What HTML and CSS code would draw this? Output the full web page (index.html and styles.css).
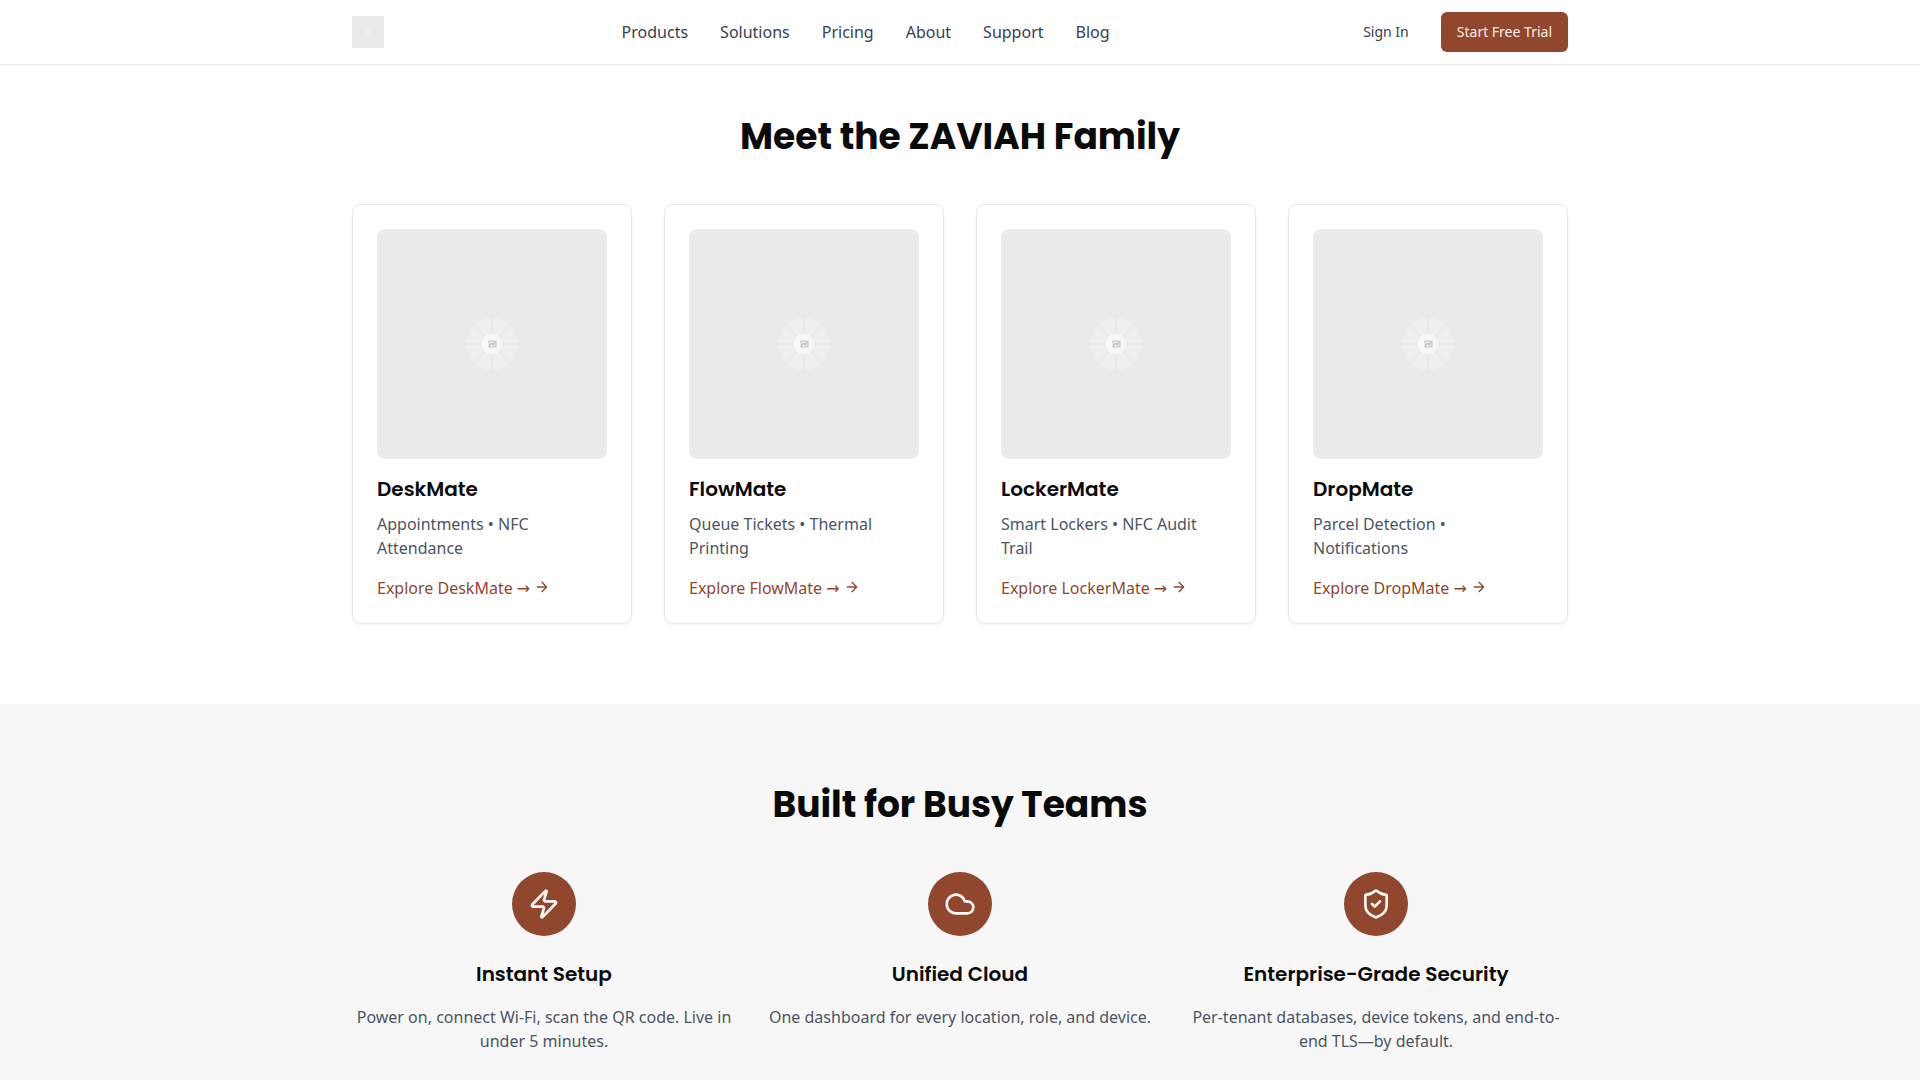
FILE: index.html
```html
<!DOCTYPE html>
<html lang="en">
<head>
<meta charset="utf-8">
<meta name="viewport" content="width=device-width, initial-scale=1">
<title>ZAVIAH</title>
<link rel="stylesheet" href="styles.css">
</head>
<body>
<svg class="sprite" aria-hidden="true">
  <symbol id="placeholder" viewBox="0 0 230 230">
    <circle cx="115" cy="115" r="26" fill="#efefef"/>
    <g stroke="#e5e5e5" stroke-width="1">
      <path d="M84 115h62M115 84v62M88 88l54 54M142 88l-54 54"/>
    </g>
    <circle cx="115" cy="115" r="11" fill="#f7f7f7" stroke="#ebebeb"/>
    <rect x="112" y="112" width="7" height="6" fill="#e4e4e4" stroke="#c4c4c4"/>
    <path d="M112 117l3-3 1 2 2-3" fill="none" stroke="#b8b8b8"/>
  </symbol>
  <symbol id="arrow" viewBox="0 0 24 24">
    <path d="M5 12h14M12 5l7 7-7 7"/>
  </symbol>
</svg>

<header class="header">
  <div class="container header-row">
    <a class="logo" href="#" aria-label="ZAVIAH home">
      <svg viewBox="0 0 32 32" aria-hidden="true"><circle cx="16" cy="16" r="3" fill="#eeeeee"/></svg>
    </a>
    <nav class="nav">
      <a href="#">Products</a>
      <a href="#">Solutions</a>
      <a href="#">Pricing</a>
      <a href="#">About</a>
      <a href="#">Support</a>
      <a href="#">Blog</a>
    </nav>
    <div class="actions">
      <button class="button" type="button">Sign In</button>
      <button class="button button-primary" type="button">Start Free Trial</button>
    </div>
  </div>
</header>

<main class="main">
  <section class="section products">
    <div class="container">
      <h2 class="section-title">Meet the ZAVIAH Family</h2>
      <div class="cards">
        <article class="card">
          <svg class="card-image" viewBox="0 0 230 230" aria-hidden="true"><use href="#placeholder"/></svg>
          <h3 class="card-title">DeskMate</h3>
          <p class="card-text">Appointments • NFC Attendance</p>
          <a class="card-link" href="#">Explore DeskMate → <svg class="arrow" aria-hidden="true"><use href="#arrow"/></svg></a>
        </article>
        <article class="card">
          <svg class="card-image" viewBox="0 0 230 230" aria-hidden="true"><use href="#placeholder"/></svg>
          <h3 class="card-title">FlowMate</h3>
          <p class="card-text">Queue Tickets • Thermal Printing</p>
          <a class="card-link" href="#">Explore FlowMate → <svg class="arrow" aria-hidden="true"><use href="#arrow"/></svg></a>
        </article>
        <article class="card">
          <svg class="card-image" viewBox="0 0 230 230" aria-hidden="true"><use href="#placeholder"/></svg>
          <h3 class="card-title">LockerMate</h3>
          <p class="card-text">Smart Lockers • NFC Audit Trail</p>
          <a class="card-link" href="#">Explore LockerMate → <svg class="arrow" aria-hidden="true"><use href="#arrow"/></svg></a>
        </article>
        <article class="card">
          <svg class="card-image" viewBox="0 0 230 230" aria-hidden="true"><use href="#placeholder"/></svg>
          <h3 class="card-title">DropMate</h3>
          <p class="card-text">Parcel Detection • Notifications</p>
          <a class="card-link" href="#">Explore DropMate → <svg class="arrow" aria-hidden="true"><use href="#arrow"/></svg></a>
        </article>
      </div>
    </div>
  </section>

  <section class="section features">
    <div class="container">
      <h2 class="section-title">Built for Busy Teams</h2>
      <div class="feature-grid">
        <div class="feature">
          <span class="feature-icon">
            <svg viewBox="0 0 24 24" aria-hidden="true"><path d="M4 14a1 1 0 0 1-.78-1.63l9.9-10.2a.5.5 0 0 1 .86.46l-1.92 6.02A1 1 0 0 0 13 10h7a1 1 0 0 1 .78 1.63l-9.9 10.2a.5.5 0 0 1-.86-.46l1.92-6.02A1 1 0 0 0 11 14z"/></svg>
          </span>
          <h3 class="feature-title">Instant Setup</h3>
          <p class="feature-text">Power on, connect Wi-Fi, scan the QR code. Live in under 5 minutes.</p>
        </div>
        <div class="feature">
          <span class="feature-icon">
            <svg viewBox="0 0 24 24" aria-hidden="true"><path d="M17.5 19H9a7 7 0 1 1 6.71-9h1.79a4.5 4.5 0 1 1 0 9Z"/></svg>
          </span>
          <h3 class="feature-title">Unified Cloud</h3>
          <p class="feature-text">One dashboard for every location, role, and device.</p>
        </div>
        <div class="feature">
          <span class="feature-icon">
            <svg viewBox="0 0 24 24" aria-hidden="true"><path d="M20 13c0 5-3.500 7.500-7.660 8.950a1 1 0 0 1-.67-.01C7.500 20.500 4 18 4 13V6a1 1 0 0 1 1-1c2 0 4.500-1.200 6.240-2.720a1.170 1.170 0 0 1 1.520 0C14.510 3.810 17 5 19 5a1 1 0 0 1 1 1z"/><path d="m9 12 2 2 4-4"/></svg>
          </span>
          <h3 class="feature-title">Enterprise-Grade Security</h3>
          <p class="feature-text">Per-tenant databases, device tokens, and end-to-end TLS—by default.</p>
        </div>
      </div>
    </div>
  </section>
</main>
</body>
</html>
```
FILE: styles.css
```css
*, *::before, *::after {
  box-sizing: border-box;
}

body {
  margin: 0;
  min-height: 100vh;
  display: flex;
  flex-direction: column;
  background: #ffffff;
  color: #0a0a0a;
  font-family: "Noto Sans", "DejaVu Sans", sans-serif;
  font-size: 16px;
  line-height: 24px;
}

h2, h3, p {
  margin: 0;
}

a {
  color: inherit;
  text-decoration: none;
}

.sprite {
  display: none;
}

.container {
  width: 100%;
  max-width: 1280px;
  margin: 0 auto;
  padding: 0 32px;
}

.header {
  position: sticky;
  top: 0;
  background: #ffffff;
  border-bottom: 1px solid #e5e7eb;
}

.header-row {
  display: flex;
  align-items: center;
  justify-content: space-between;
  min-height: 64px;
}

.logo {
  width: 32px;
  height: 32px;
  background: #eaeaea;
}

.nav {
  display: flex;
  gap: 32px;
  color: #374151;
  line-height: 26px;
}

.actions {
  display: flex;
  gap: 16px;
}

.button {
  height: 40px;
  padding: 0 16px;
  border: 0;
  border-radius: 6px;
  background: transparent;
  color: #374151;
  font-family: inherit;
  font-size: 14px;
  line-height: 20px;
}

.button-primary {
  background: #91472e;
  color: #fbeee6;
}

.main {
  flex: 1;
  display: flex;
  flex-direction: column;
}

.section-title {
  margin-bottom: 46px;
  font-family: Poppins, Inter, sans-serif;
  font-size: 36px;
  font-weight: 700;
  line-height: 42px;
  text-align: center;
}

.products {
  padding: 51px 0 80px;
}

.cards {
  display: grid;
  grid-template-columns: repeat(4, 1fr);
  gap: 32px;
}

.card {
  padding: 24px 24px 23px;
  border: 1px solid #e5e7eb;
  border-radius: 8px;
  background: #ffffff;
  box-shadow: 0 1px 2px rgba(0, 0, 0, 0.05);
}

.card-image {
  display: block;
  width: 100%;
  margin-bottom: 16px;
  border-radius: 8px;
  background: #eaeaea;
}

.card-title,
.feature-title {
  font-family: Poppins, Inter, sans-serif;
  font-size: 20px;
  font-weight: 600;
  line-height: 28px;
}

.card-title {
  margin-bottom: 9px;
}

.card-text {
  margin-bottom: 16px;
  color: #4b5563;
}

.card-link {
  display: flex;
  align-items: center;
  gap: 4px;
  color: #91472e;
}

.arrow {
  width: 16px;
  height: 16px;
  margin-bottom: 2px;
  fill: none;
  stroke: currentColor;
  stroke-width: 2;
  stroke-linecap: round;
  stroke-linejoin: round;
}

.features {
  flex: 1;
  padding: 80px 0 24px;
  background: #f7f7f7;
}

.feature-grid {
  display: grid;
  grid-template-columns: repeat(3, 1fr);
  gap: 32px;
}

.feature {
  display: flex;
  flex-direction: column;
  align-items: center;
  text-align: center;
}

.feature-icon {
  display: flex;
  align-items: center;
  justify-content: center;
  width: 64px;
  height: 64px;
  margin-bottom: 24px;
  border-radius: 50%;
  background: #91472e;
}

.feature-icon svg {
  width: 32px;
  height: 32px;
  fill: none;
  stroke: #fffaf5;
  stroke-width: 2;
  stroke-linecap: round;
  stroke-linejoin: round;
}

.feature-title {
  margin-bottom: 17px;
}

.feature-text {
  color: #4b5563;
}
```
